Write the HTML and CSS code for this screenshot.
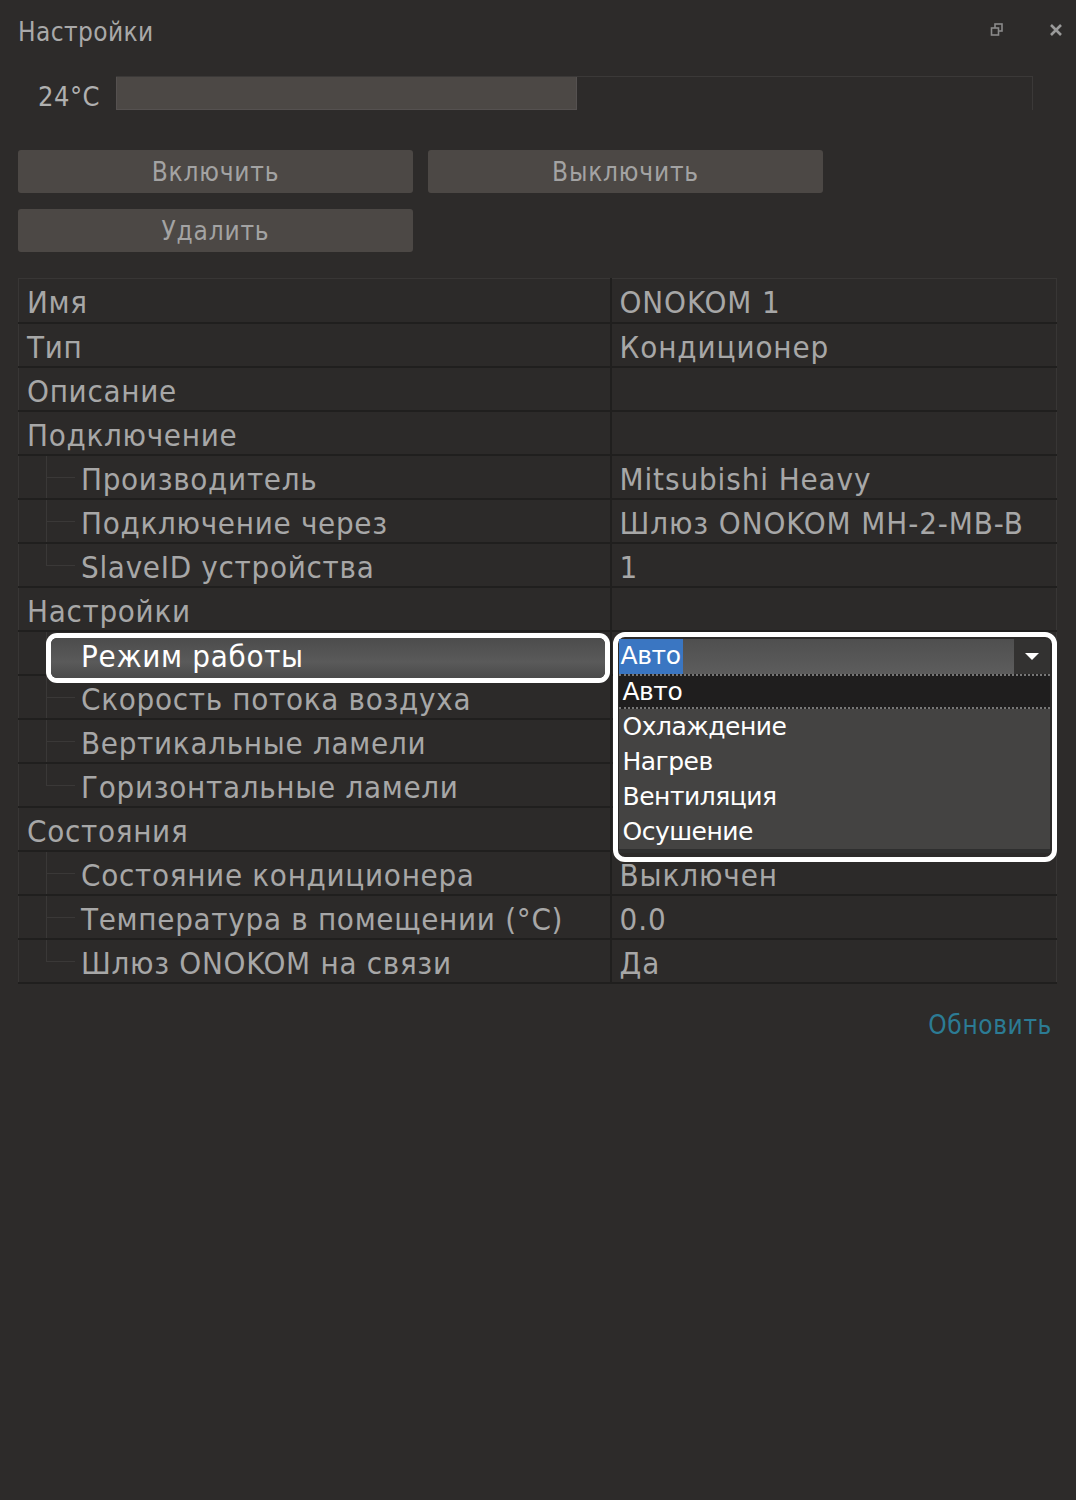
FILE: index.html
```html
<!DOCTYPE html>
<html>
	<head>
		<meta charset="UTF-8">
		<title>Настройки</title>
		<link rel="stylesheet" href="styles.css">
	</head>
	<body>
		<div class="window">
			<div class="titlebar">
				<div class="title">Настройки</div>
				<div class="tools">
					<svg class="ico" width="14" height="14" viewBox="0 0 14 14">
						<rect x="5" y="1" width="7" height="7" fill="none" stroke="#8a8a8a" stroke-width="1.6"/>
						<rect x="1.5" y="5" width="7" height="7" fill="#2d2b2a" stroke="#8a8a8a" stroke-width="1.6"/>
					</svg>
					<svg class="ico" width="14" height="14" viewBox="0 0 14 14">
						<path d="M2 2 L12 12 M12 2 L2 12" stroke="#9a9a9a" stroke-width="2.6"/>
					</svg>
				</div>
			</div>

			<div class="temp">
				<span class="temp-label">24°C</span>
				<div class="track"><div class="fill" style="width: 50.3%"></div></div>
			</div>

			<div class="buttons">
				<div class="btn">Включить</div>
				<div class="btn">Выключить</div>
				<div class="btn">Удалить</div>
			</div>

			<table class="props">
				<colgroup><col class="c-name"><col class="c-val"></colgroup>
				<tr><td class="name">Имя</td><td class="val">ONOKOM 1</td></tr>
				<tr><td class="name">Тип</td><td class="val">Кондиционер</td></tr>
				<tr><td class="name">Описание</td><td class="val"></td></tr>
				<tr><td class="name">Подключение</td><td class="val"></td></tr>
				<tr><td class="name child">Производитель</td><td class="val">Mitsubishi Heavy</td></tr>
				<tr><td class="name child">Подключение через</td><td class="val">Шлюз ONOKOM MH-2-MB-B</td></tr>
				<tr><td class="name child last">SlaveID устройства</td><td class="val">1</td></tr>
				<tr><td class="name">Настройки</td><td class="val"></td></tr>
				<tr>
					<td class="name child sel"><div class="hl">Режим работы</div></td>
					<td class="val popcell">
						<div class="dropdown">
							<div class="combo">
								<span class="combo-text">Авто</span>
								<span class="arrow"></span>
							</div>
							<div class="list">
								<div class="item cur">Авто</div>
								<div class="item">Охлаждение</div>
								<div class="item">Нагрев</div>
								<div class="item">Вентиляция</div>
								<div class="item">Осушение</div>
							</div>
						</div>
					</td>
				</tr>
				<tr><td class="name child">Скорость потока воздуха</td><td class="val"></td></tr>
				<tr><td class="name child">Вертикальные ламели</td><td class="val"></td></tr>
				<tr><td class="name child last">Горизонтальные ламели</td><td class="val"></td></tr>
				<tr><td class="name">Состояния</td><td class="val"></td></tr>
				<tr><td class="name child">Состояние кондиционера</td><td class="val">Выключен</td></tr>
				<tr><td class="name child">Температура в помещении (°C)</td><td class="val">0.0</td></tr>
				<tr><td class="name child last">Шлюз ONOKOM на связи</td><td class="val">Да</td></tr>
			</table>

			<div class="footer"><a href="" class="refresh">Обновить</a></div>
		</div>
	</body>
</html>
```

FILE: styles.css
```css
* {
	margin: 0;
	padding: 0;
	box-sizing: border-box;
}

body {
	background-color: #2d2b2a;
	font-family: "DejaVu Sans", "Noto Sans", sans-serif;
	font-stretch: condensed;
	color: #a7a7a7;
	height: 1500px;
}

.window {
	padding: 0 18px 0 18px;
}

.titlebar {
	height: 62px;
	display: flex;
	align-items: center;
	justify-content: space-between;
	padding-top: 2px;
}
.title {
	font-size: 26px;
	letter-spacing: 0.4px;
	color: #a9a9a9;
}
.tools {
	display: flex;
	gap: 45px;
	margin-right: -5px;
	margin-top: -4px;
}

.temp {
	display: flex;
	align-items: center;
	height: 34px;
	margin-top: 14px;
	padding-left: 20px;
}
.temp-label {
	width: 78px;
	font-size: 27px;
	letter-spacing: 0.5px;
	color: #b0b0b0;
	padding-top: 6px;
}
.track {
	width: 917px;
	height: 34px;
	border-top: 1px solid #3b3938;
	border-right: 1px solid #3b3938;
}
.fill {
	height: 33px;
	background-color: #4c4845;
	border: 1px solid #555150;
	border-top: none;
}

.buttons {
	display: grid;
	grid-template-columns: 395px 395px;
	column-gap: 15px;
	row-gap: 16px;
	margin-top: 40px;
}
.btn {
	height: 43px;
	line-height: 45px;
	text-align: center;
	background-color: #4c4845;
	border-radius: 3px;
	font-size: 26px;
	color: #a3a3a3;
	letter-spacing: 0.8px;
}

.props {
	margin-top: 26px;
	width: 1039px;
	table-layout: fixed;
	border-collapse: collapse;
	border: 1px solid #383635;
	background-color: #2c2a29;
	font-size: 31px;
	letter-spacing: 0.7px;
}
.c-name {
	width: 592px;
}
.props td {
	height: 44px;
	border-bottom: 2px solid #201f1e;
	white-space: nowrap;
	vertical-align: middle;
	overflow: visible;
	padding-top: 4px;
}
.props td.name {
	padding-left: 8px;
	border-right: 2px solid #201f1e;
	position: relative;
}
.props td.val {
	padding-left: 8px;
	letter-spacing: 0.9px;
}
.props td.child {
	padding-left: 62px;
}
.child::before {
	content: "";
	position: absolute;
	left: 27px;
	top: 0;
	bottom: 0;
	border-left: 1px solid #3a3837;
}
.child.last::before {
	bottom: 50%;
}
.child::after {
	content: "";
	position: absolute;
	left: 27px;
	width: 29px;
	top: 50%;
	border-top: 1px solid #3a3837;
}

/* выделенная строка */
.props td.sel {
	padding-left: 0;
}
.hl {
	position: absolute;
	left: 32px;
	right: 5px;
	top: 6px;
	height: 40px;
	padding-left: 30px;
	line-height: 36px;
	color: #ffffff;
	background: linear-gradient(#4c4c4c, #5a5a5a 60%, #4a4a4a);
	box-shadow: 0 0 0 5px #ffffff;
	border-radius: 6px;
	z-index: 2;
}

/* выпадающий список */
.popcell {
	position: relative;
}
.dropdown {
	position: absolute;
	left: 1px;
	top: 0;
	width: 444px;
	height: 230px;
	border: 5px solid #ffffff;
	border-radius: 12px;
	padding: 2px 2px 0 1px;
	background-color: #2c2a29;
	z-index: 3;
	font-stretch: normal;
	letter-spacing: 0;
}
.combo {
	display: flex;
	justify-content: space-between;
	height: 35px;
	background: linear-gradient(#4f4f4f, #5d5d5d);
}
.combo-text {
	background-color: #3a76c2;
	color: #ffffff;
	font-size: 25px;
	line-height: 33px;
	padding: 0 2px;
	letter-spacing: -0.4px;
}
.arrow {
	width: 36px;
	background-color: #333231;
	position: relative;
}
.arrow::after {
	content: "";
	position: absolute;
	left: 11px;
	top: 14px;
	border-left: 7px solid transparent;
	border-right: 7px solid transparent;
	border-top: 7px solid #ffffff;
}
.list {
	height: 179px;
	background-color: #444342;
	border-bottom: 4px solid #2f2f2f;
}
.item {
	height: 35px;
	line-height: 35px;
	padding-left: 4px;
	font-size: 25px;
	color: #ffffff;
	letter-spacing: -0.5px;
}
.item.cur {
	background-color: #1f1e1e;
	border-top: 2px dotted #777;
	border-bottom: 2px dotted #777;
	line-height: 31px;
}

.footer {
	display: flex;
	justify-content: flex-end;
	margin-top: 26px;
	padding-right: 6px;
}
a {
	text-decoration: none;
}
.refresh {
	font-size: 26px;
	letter-spacing: 0.6px;
	color: #2c7b94;
}
```
